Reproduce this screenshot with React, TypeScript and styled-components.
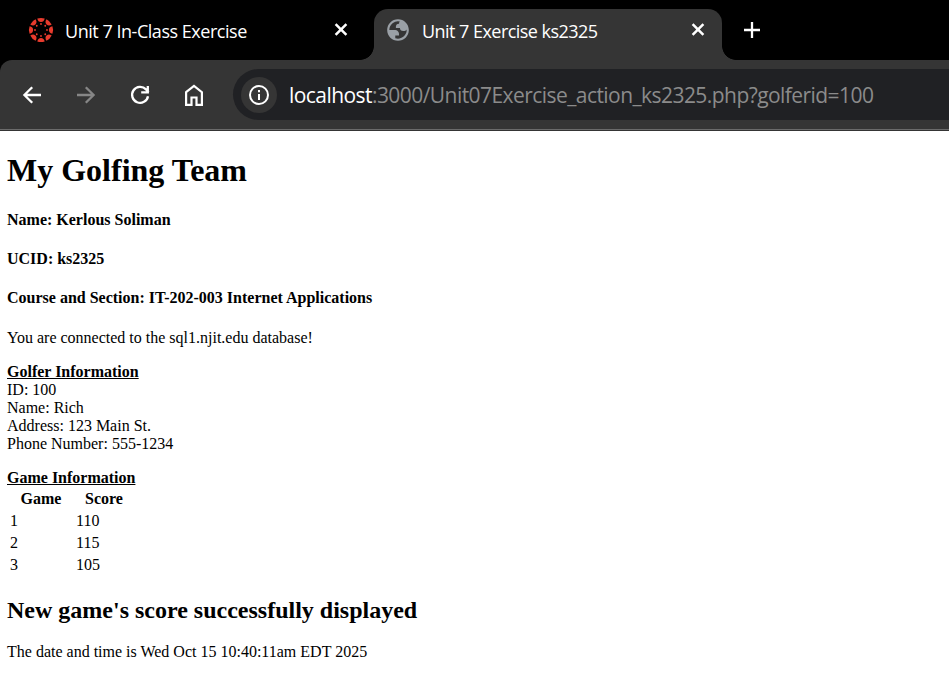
import React from "react";
import styled, { createGlobalStyle } from "styled-components";

const GlobalStyle = createGlobalStyle`
  html, body { margin: 0; padding: 0; background: #fff; }
  * { box-sizing: border-box; }
`;

const Window = styled.div`
  width: 949px;
  height: 697px;
  overflow: hidden;
  background: #fff;
`;

const TabStrip = styled.div`
  display: flex;
  height: 60px;
  padding-top: 9px;
  background: #000;
`;

const Tab = styled.div<{ $active?: boolean }>`
  position: relative;
  display: flex;
  align-items: center;
  height: 51px;
  width: ${(p) => (p.$active ? 348 : 374)}px;
  padding: 0 ${(p) => (p.$active ? "16px 9px 11px" : "25px 9px 28px")};
  border-radius: 14px 14px 0 0;
  background: ${(p) => (p.$active ? "#353535" : "#000")};

  &::before,
  &::after {
    content: "";
    display: ${(p) => (p.$active ? "block" : "none")};
    position: absolute;
    bottom: 0;
    width: 14px;
    height: 14px;
  }
  &::before {
    right: 100%;
    background: radial-gradient(circle at 0 0, #000 13.5px, #353535 14.2px);
  }
  &::after {
    left: 100%;
    background: radial-gradient(circle at 100% 0, #000 13.5px, #353535 14.2px);
  }
`;

const TabIcon = styled.span`
  display: flex;
  margin-right: 11px;
`;

const TabTitle = styled.span<{ $spacing: number }>`
  flex: 1;
  padding-top: 1px;
  color: #fff;
  font: 18px/24px "Open Sans", "Noto Sans", sans-serif;
  letter-spacing: ${(p) => p.$spacing}px;
  white-space: nowrap;
`;

const NewTab = styled.div`
  display: flex;
  align-items: center;
  margin-left: 22px;
  padding-bottom: 9px;
`;

const ToolbarBack = styled.div`
  background: #000;
`;

const Toolbar = styled.div`
  display: flex;
  align-items: center;
  height: 71px;
  padding: 0 0 2px 20px;
  border-radius: 12px 0 0 0;
  background: #353535;
  box-shadow: inset 0 -1px #353535, inset 0 -2px #6b6b6b;
`;

const NavButton = styled.span<{ $dim?: boolean }>`
  display: flex;
  width: 24px;
  margin-right: 30px;
  color: ${(p) => (p.$dim ? "#868686" : "#fff")};
`;

const AddressBar = styled.div`
  display: flex;
  align-items: center;
  flex: 1;
  height: 51px;
  margin-left: -3px;
  padding-left: 8px;
  border-radius: 26px 0 0 26px;
  background: #202124;
`;

const SiteInfo = styled.span`
  display: flex;
  align-items: center;
  justify-content: center;
  width: 36px;
  height: 36px;
  border-radius: 50%;
  background: #353535;
`;

const Url = styled.span`
  margin-left: 12px;
  color: #8b8b8b;
  font: 21px/28px "Open Sans", "Noto Sans", sans-serif;
  letter-spacing: -0.56px;
  white-space: nowrap;
`;

const Host = styled.span`
  color: #fff;
`;

const Page = styled.main`
  padding: 21px 0 0 7px;
  color: #000;
  font: 16px/18px "Liberation Serif", "Times New Roman", serif;
`;

const Title = styled.h1`
  margin: 0 0 23px;
  font-size: 32px;
  line-height: 36px;
`;

const Detail = styled.h4`
  margin: 0 0 21px;
  font-size: 16px;
`;

const Status = styled.p`
  margin: 22px 0 16px;
`;

const Golfer = styled.section`
  margin-bottom: 16px;
`;

const SectionName = styled.div`
  font-weight: bold;
  text-decoration: underline;
`;

const Games = styled.table`
  border-spacing: 2px;

  th, td { padding: 1px; }
  th:first-child { width: 64px; }
  th:last-child { width: 58px; }
`;

const Result = styled.h2`
  margin: 20px 0 19px;
  font-size: 24px;
  line-height: 27px;
`;

const Stamp = styled.p`
  margin: 0;
`;

const CanvasLogo = () => (
  <svg width="26" height="26" viewBox="-13 -13 26 26" fill="#e83b2d">
    {[0, 45, 90, 135, 180, 225, 270, 315].map((a) => (
      <g key={a} transform={`rotate(${a})`}>
        <path d="M-3.7-11.4Q0-12.8 3.7-11.4Q3-7.9 0-7.9Q-3-7.9-3.7-11.4Z" />
        <circle cy="-6" r="0.9" />
      </g>
    ))}
  </svg>
);

const Globe = () => (
  <svg width="26" height="26" viewBox="0 0 24 24" fill="#9aa0a6">
    <path fillRule="evenodd" d="M12 2C6.48 2 2 6.48 2 12s4.48 10 10 10 10-4.48 10-10S17.52 2 12 2zM4 12h4.4c3.407.022 4.922 1.73 4.543 5.127H9.488v2.47a8.004 8.004 0 0 0 10.498-8.083C19.327 12.504 18.332 13 17 13c-2.137 0-3.206-.916-3.206-2.75h-3.748c-.274-2.728.683-4.092 2.87-4.092 0-.975.327-1.597.811-1.97A8.004 8.004 0 0 0 4 12z" />
  </svg>
);

const Close = () => (
  <svg width="16" height="16" viewBox="0 0 16 16" stroke="#fff" strokeWidth="2.5">
    <path d="M2.6 2.1l10.8 10.8M13.4 2.1l-10.8 10.8" />
  </svg>
);

const Plus = () => (
  <svg width="16" height="16" viewBox="0 0 16 16" stroke="#fff" strokeWidth="2.3">
    <path d="M8 0v16M0 8h16" />
  </svg>
);

const Arrow = ({ flip }: { flip?: boolean }) => (
  <svg width="24" height="24" viewBox="0 0 24 24" fill="none" stroke="currentColor" strokeWidth="2.3">
    <path transform={flip ? "matrix(-1 0 0 1 24 0)" : undefined} d="M21 12H4.6M12.2 4.2L4.4 12l7.8 7.8" />
  </svg>
);

const Reload = () => (
  <svg width="24" height="24" viewBox="0 0 24 24" fill="none" stroke="currentColor" strokeWidth="2.3">
    <path d="M20 13.2a8 8 0 1 1-2-6.8L20.6 9M19.8 3v6.3h-6.6" />
  </svg>
);

const Home = () => (
  <svg width="24" height="24" viewBox="0 0 24 24" fill="none" stroke="currentColor" strokeWidth="2.2">
    <path d="M4.1 9.2L12 3l7.9 6.2v12.7h-5.4v-7.4h-5v7.4H4.1Z" />
  </svg>
);

const Info = () => (
  <svg width="22" height="22" viewBox="0 0 22 22" fill="none" stroke="#fff" strokeWidth="2">
    <circle cx="11" cy="11" r="9" />
    <path d="M11 10v6M11 6v2.2" />
  </svg>
);

const details = ["Name: Kerlous Soliman", "UCID: ks2325", "Course and Section: IT-202-003 Internet Applications"];
const golfer = ["ID: 100", "Name: Rich", "Address: 123 Main St.", "Phone Number: 555-1234"];
const games = [[1, 110], [2, 115], [3, 105]];

export default function App() {
  return (
    <Window>
      <GlobalStyle />
      <TabStrip>
        <Tab>
          <TabIcon><CanvasLogo /></TabIcon>
          <TabTitle $spacing={-0.47}>Unit 7 In-Class Exercise</TabTitle>
          <Close />
        </Tab>
        <Tab $active>
          <TabIcon><Globe /></TabIcon>
          <TabTitle $spacing={-0.54}>Unit 7 Exercise ks2325</TabTitle>
          <Close />
        </Tab>
        <NewTab><Plus /></NewTab>
      </TabStrip>
      <ToolbarBack>
        <Toolbar>
          <NavButton><Arrow /></NavButton>
          <NavButton $dim><Arrow flip /></NavButton>
          <NavButton><Reload /></NavButton>
          <NavButton><Home /></NavButton>
          <AddressBar>
            <SiteInfo><Info /></SiteInfo>
            <Url><Host>localhost</Host>:3000/Unit07Exercise_action_ks2325.php?golferid=100</Url>
          </AddressBar>
        </Toolbar>
      </ToolbarBack>
      <Page>
        <Title>My Golfing Team</Title>
        {details.map((d) => <Detail key={d}>{d}</Detail>)}
        <Status>You are connected to the sql1.njit.edu database!</Status>
        <Golfer>
          <SectionName>Golfer Information</SectionName>
          {golfer.map((g) => <div key={g}>{g}</div>)}
        </Golfer>
        <SectionName>Game Information</SectionName>
        <Games>
          <thead><tr><th>Game</th><th>Score</th></tr></thead>
          <tbody>
            {games.map(([n, s]) => <tr key={n}><td>{n}</td><td>{s}</td></tr>)}
          </tbody>
        </Games>
        <Result>New game's score successfully displayed</Result>
        <Stamp>The date and time is Wed Oct 15 10:40:11am EDT 2025</Stamp>
      </Page>
    </Window>
  );
}
